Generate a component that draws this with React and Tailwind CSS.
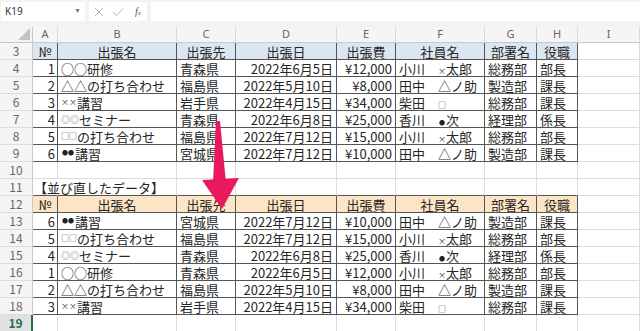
import React from 'react';

const COLS = ['w-[33px]', 'w-[25px]', 'w-[119px]', 'w-[59px]', 'w-[101px]', 'w-[59px]', 'w-[89px]', 'w-[52px]', 'w-[41px]', 'w-[62px]'];
const LETTERS = ['A', 'B', 'C', 'D', 'E', 'F', 'G', 'H', 'I'];
const ALIGN = ['', 'justify-end pr-[2px]', 'justify-start pl-[3px]', 'justify-start pl-[3px]', 'justify-end pr-[3px]', 'justify-end pr-[3px]', 'justify-start pl-[3px]', 'justify-start pl-[3px]', 'justify-start pl-[3px]'];

const Sm = ({ children }) => <span className="text-[8px] leading-none text-[#333]">{children}</span>;
const Dot = ({ children }) => <span className="text-[6px] leading-none text-[#222] px-[1px]">{children}</span>;
const name = (a, b) => (
    <>
        <span className="inline-block w-[39px]">{a}</span>
        <span>{b}</span>
    </>
);

const HEAD = ['№', '出張名', '出張先', '出張日', '出張費', '社員名', '部署名', '役職'];

const R = {
    1: ['1', '○○研修', '青森県', '2022年6月5日', '¥12,000', name('小川', <><Sm>×</Sm>太郎</>), '総務部', '部長'],
    2: ['2', '△△の打ち合わせ', '福島県', '2022年5月10日', '¥8,000', name('田中', '△ノ助'), '製造部', '課長'],
    3: ['3', <><Sm>××</Sm>講習</>, '岩手県', '2022年4月15日', '¥34,000', name('柴田', <Sm>□</Sm>), '総務部', '課長'],
    4: ['4', <><span className="text-[9px] text-[#777]">◎◎</span>セミナー</>, '青森県', '2022年6月8日', '¥25,000', name('香川', <><Dot>●</Dot>次</>), '経理部', '係長'],
    5: ['5', <><Sm>□□</Sm>の打ち合わせ</>, '福島県', '2022年7月12日', '¥15,000', name('小川', <><Sm>×</Sm>太郎</>), '総務部', '部長'],
    6: ['6', <><Dot>●●</Dot>講習</>, '宮城県', '2022年7月12日', '¥10,000', name('田中', '△ノ助'), '製造部', '課長'],
};

const ROWS = [
    { n: 3, kind: 'head', bg: 'bg-[#dce6f2]' },
    { n: 4, kind: 'data', cells: R[1] },
    { n: 5, kind: 'data', cells: R[2] },
    { n: 6, kind: 'data', cells: R[3] },
    { n: 7, kind: 'data', cells: R[4] },
    { n: 8, kind: 'data', cells: R[5] },
    { n: 9, kind: 'data', cells: R[6] },
    { n: 10, kind: 'blank' },
    { n: 11, kind: 'title' },
    { n: 12, kind: 'head', bg: 'bg-[#fce5c4]' },
    { n: 13, kind: 'data', cells: R[6] },
    { n: 14, kind: 'data', cells: R[5] },
    { n: 15, kind: 'data', cells: R[4] },
    { n: 16, kind: 'data', cells: R[1] },
    { n: 17, kind: 'data', cells: R[2] },
    { n: 18, kind: 'data', cells: R[3] },
    { n: 19, kind: 'blank', selected: true },
];

const SheetRow = ({ row }) => {
    const inTable = row.kind === 'head' || row.kind === 'data';
    return (
        <div className="flex h-[17px]">
            <div className={`${COLS[0]} shrink-0 h-full flex items-center justify-center text-[12px] border-b border-[#dcdcdc] ${row.selected
                ? 'bg-[#e1e1e1] text-[#217346] font-bold border-r-2 border-r-[#217346]'
                : 'bg-[#f5f5f5] text-[#666] border-r border-r-[#c8c8c8]'}`}>
                {row.n}
            </div>
            {COLS.slice(1).map((w, i) => {
                const col = i + 1;
                const tableCol = col <= 8;
                const dark = inTable && tableCol;
                let cls = `${w} shrink-0 h-full flex items-center whitespace-nowrap overflow-visible border-r border-b`;
                if (dark) cls += ' border-[#555]';
                else if (row.kind === 'title') {
                    cls += tableCol ? ' border-r-[#dcdcdc] border-b-[#555]' : ' border-[#dcdcdc]';
                    if (col === 1) cls += ' border-r-transparent';
                } else cls += ' border-[#dcdcdc]';

                let content = null;
                if (row.kind === 'head' && tableCol) {
                    cls += ` ${row.bg} justify-center`;
                    content = HEAD[i];
                } else if (row.kind === 'data' && tableCol) {
                    cls += ` ${ALIGN[col]}`;
                    content = row.cells[i];
                } else if (row.kind === 'title' && col === 1) {
                    content = <span className="pl-[1px] relative z-10">【並び直したデータ】</span>;
                }
                return <div key={col} className={cls}>{content}</div>;
            })}
        </div>
    );
};

const FormulaBar = () => (
    <div className="h-[27px] bg-[#f3f3f3] flex items-start pt-[2px] gap-[4px] font-['Noto_Sans','Liberation_Sans',sans-serif]">
        <div className="w-[84px] h-[19px] ml-[1px] bg-white flex items-center justify-between px-[4px] text-[10px] text-[#333]">
            <span>K19</span>
            <span className="text-[7px] text-[#777]">▼</span>
        </div>
        <div className="w-[58px] h-[19px] bg-white flex items-center gap-[8px] pl-[5px]">
            <svg width="10" height="10" viewBox="0 0 10 10" fill="none" stroke="#b5b5b5" strokeWidth="1">
                <path d="M1 1 L9 9 M9 1 L1 9" />
            </svg>
            <svg width="12" height="10" viewBox="0 0 12 10" fill="none" stroke="#b5b5b5" strokeWidth="1">
                <path d="M1 5 L4.5 8.5 L11 1.5" />
            </svg>
            <span className="text-[10px] italic font-['Liberation_Serif',serif] text-[#555] pl-[3px]">f<span className="text-[7px]">x</span></span>
        </div>
        <div className="flex-1 h-[19px] bg-white" />
    </div>
);

const ColumnHeader = () => (
    <div className="flex h-[16px] bg-[#f5f5f5] font-['Noto_Sans','Liberation_Sans',sans-serif]">
        <div className={`${COLS[0]} shrink-0 h-full relative border-r border-b border-[#c8c8c8]`}>
            <svg className="absolute right-[2px] bottom-[2px]" width="12" height="12" viewBox="0 0 12 12">
                <polygon points="12,0 12,12 0,12" fill="#c4c4c4" />
            </svg>
        </div>
        {COLS.slice(1).map((w, i) => (
            <div key={i} className={`${w} shrink-0 h-full flex items-center justify-center text-[11px] text-[#666] border-r border-b border-r-[#dadada] border-b-[#c8c8c8]`}>
                {LETTERS[i]}
            </div>
        ))}
    </div>
);

export default function App() {
    return (
        <div className="relative w-[640px] h-[331px] overflow-hidden bg-white text-[#262626] font-['Noto_Sans_CJK_JP',sans-serif]">
            <FormulaBar />
            <ColumnHeader />
            <div className="text-[13px] leading-none">
                {ROWS.map((row) => <SheetRow key={row.n} row={row} />)}
            </div>
            <svg className="absolute inset-0 pointer-events-none" width="640" height="331" viewBox="0 0 640 331">
                <polygon points="216,121 220,121 226,183 213,183" fill="#e8195f" />
                <polygon points="202,180 239,178 222,209" fill="#e8195f" />
            </svg>
        </div>
    );
}
